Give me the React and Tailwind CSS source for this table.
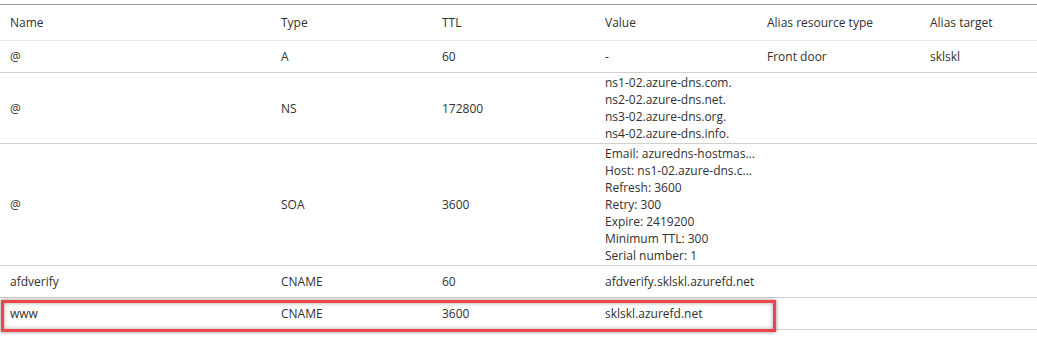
import React from "react";

const columns = ["Name", "Type", "TTL", "Value", "Alias resource type", "Alias target"];

const records = [
  { name: "@", type: "A", ttl: "60", value: ["-"], aliasType: "Front door", aliasTarget: "sklskl" },
  {
    name: "@",
    type: "NS",
    ttl: "172800",
    value: ["ns1-02.azure-dns.com.", "ns2-02.azure-dns.net.", "ns3-02.azure-dns.org.", "ns4-02.azure-dns.info."],
  },
  {
    name: "@",
    type: "SOA",
    ttl: "3600",
    value: [
      "Email: azuredns-hostmas...",
      "Host: ns1-02.azure-dns.c...",
      "Refresh: 3600",
      "Retry: 300",
      "Expire: 2419200",
      "Minimum TTL: 300",
      "Serial number: 1",
    ],
  },
  { name: "afdverify", type: "CNAME", ttl: "60", value: ["afdverify.sklskl.azurefd.net"] },
  { name: "www", type: "CNAME", ttl: "3600", value: ["sklskl.azurefd.net"], highlight: true },
];

const grid = "grid grid-cols-[271px_161px_163px_162px_163px_1fr] pl-[10px] items-center";

const App = () => {
  return (
    <div
      className="w-[1037px] h-[342px] bg-white text-[#323130] text-[12px] leading-[17px] pt-[4px]"
      style={{ fontFamily: '"Open Sans", "Noto Sans", sans-serif' }}
    >
      <div className="border-t border-[#a19f9d]">
        {/* Header */}
        <div className={`${grid} h-[36px] border-b border-[#edebe9]`}>
          {columns.map((c) => (
            <div key={c}>{c}</div>
          ))}
        </div>

        {/* Rows */}
        {records.map((r, i) => (
          <div key={i} className={`${grid} relative min-h-[32px] py-px border-b border-[#d2d0ce]`}>
            <div>{r.name}</div>
            <div>{r.type}</div>
            <div>{r.ttl}</div>
            <div>
              {r.value.map((v) => (
                <div key={v}>{v}</div>
              ))}
            </div>
            <div>{r.aliasType || ""}</div>
            <div>{r.aliasTarget || ""}</div>
            {r.highlight && (
              <div className="absolute left-[1px] top-[2px] w-[775px] h-[32px] border-[3px] border-[#ee4549] shadow-[0_0_4px_rgba(0,0,0,0.45),inset_0_0_4px_rgba(0,0,0,0.35)]" />
            )}
          </div>
        ))}
      </div>
    </div>
  );
};

export default App;
